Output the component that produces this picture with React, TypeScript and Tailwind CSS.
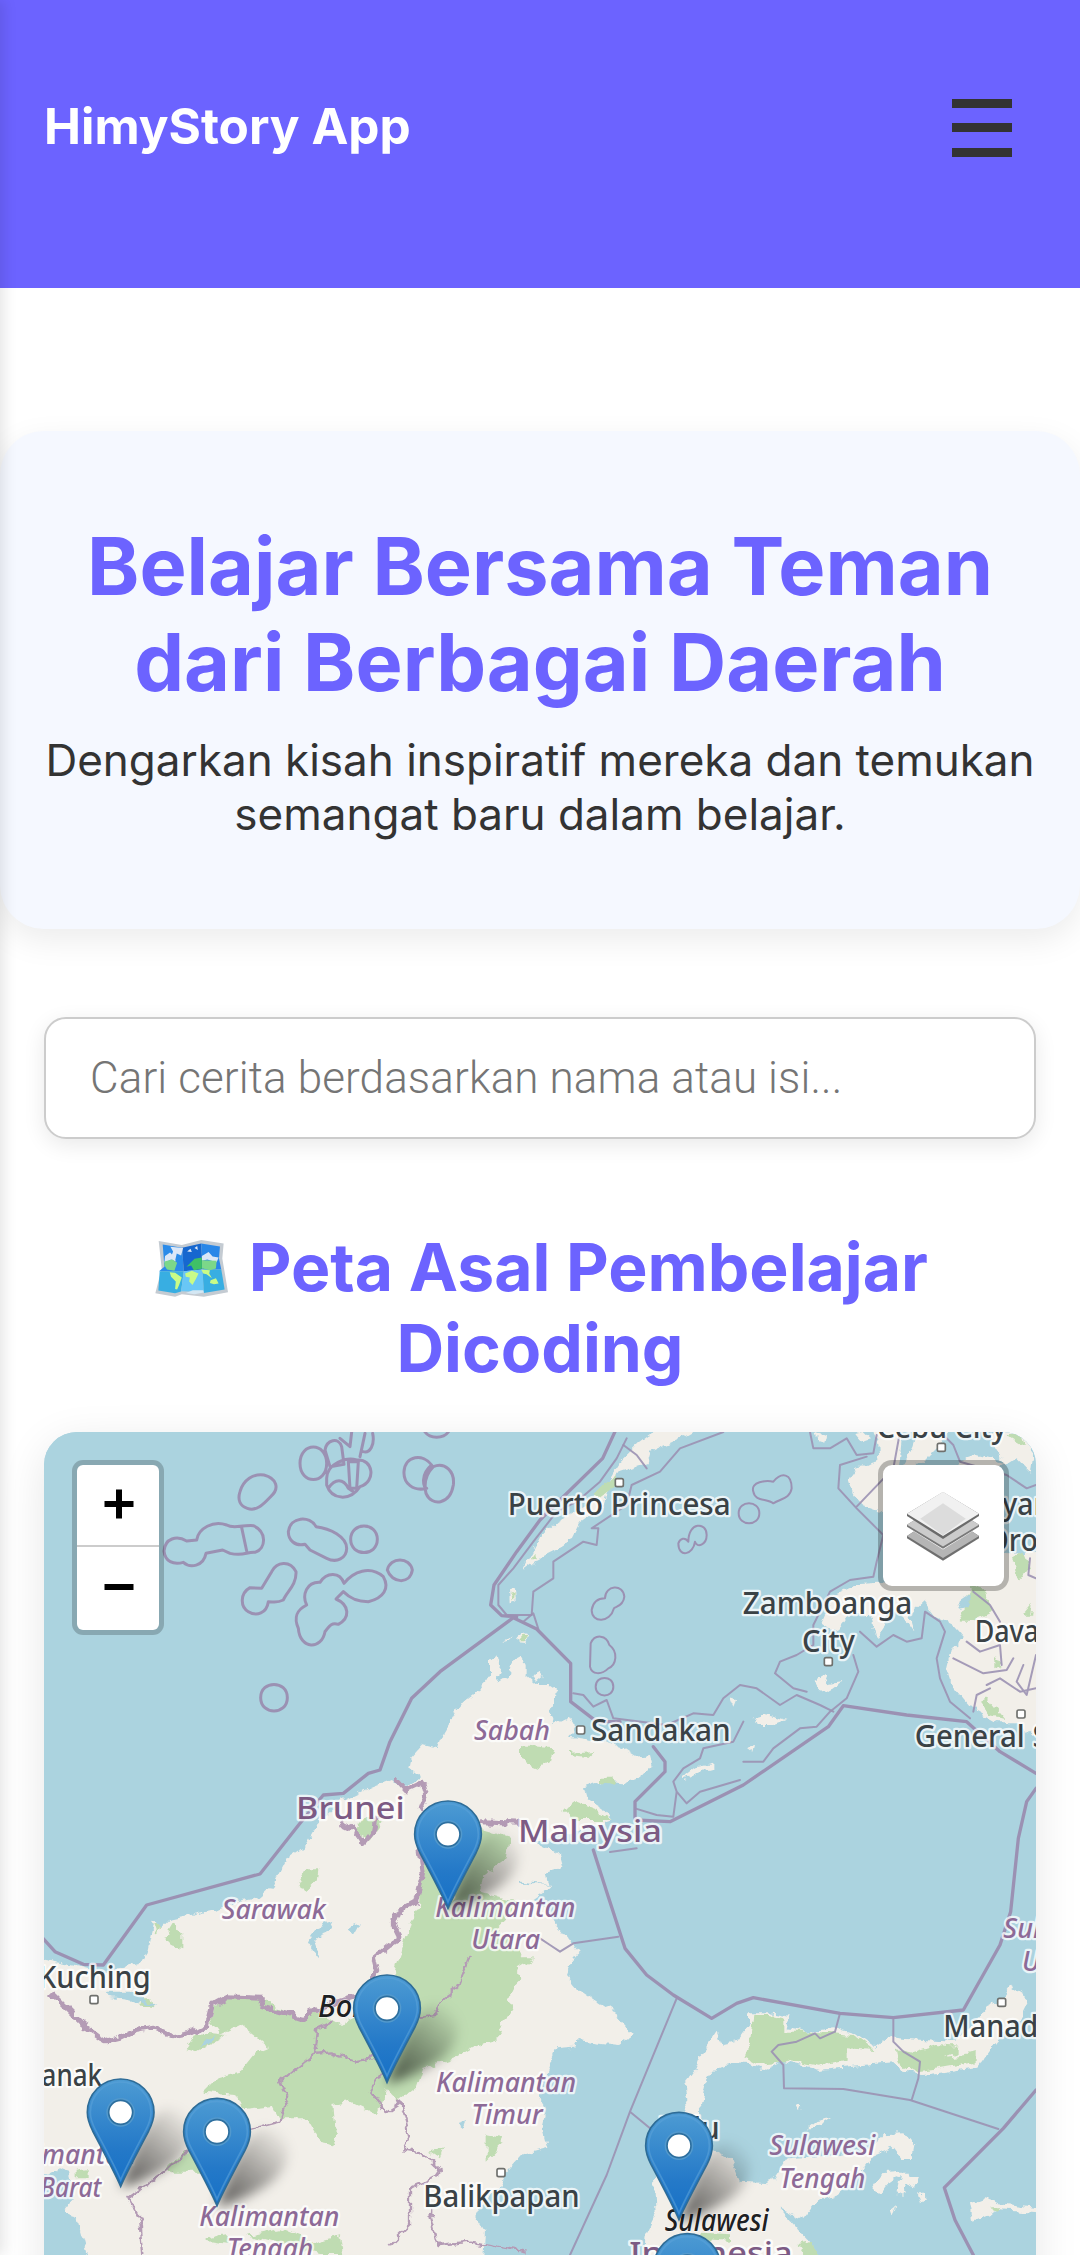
import React from "react";

type Label = { x: number; y: number; w: number; t: string; kind: "city" | "region" | "country" | "island" };

const labels: Label[] = [
  { x: 1403, y: 270, w: 669, t: "Puerto Princesa", kind: "city" },
  { x: 1653, y: 948, w: 419, t: "Sandakan", kind: "city" },
  { x: 2108, y: 568, w: 509, t: "Zamboanga", kind: "city" },
  { x: 2286, y: 680, w: 159, t: "City", kind: "city" },
  { x: 2510, y: 40, w: 390, t: "Cebu City", kind: "city" },
  { x: 2682, y: 270, w: 352, t: "Cagayan", kind: "city" },
  { x: 2839, y: 378, w: 155, t: "Oro", kind: "city" },
  { x: 2804, y: 650, w: 242, t: "Davao", kind: "city" },
  { x: 2624, y: 965, w: 330, t: "General", kind: "city" },
  { x: 2978, y: 965, w: 240, t: "Santos", kind: "city" },
  { x: -6, y: 1688, w: 338, t: "Kuching", kind: "city" },
  { x: -190, y: 1983, w: 376, t: "Pontianak", kind: "city" },
  { x: 1150, y: 2347, w: 469, t: "Balikpapan", kind: "city" },
  { x: 2710, y: 1835, w: 338, t: "Manado", kind: "city" },
  { x: 1853, y: 2143, w: 186, t: "Palu", kind: "city" },
  { x: 768, y: 1182, w: 326, t: "Brunei", kind: "country" },
  { x: 1434, y: 1252, w: 432, t: "Malaysia", kind: "country" },
  { x: 1768, y: 2518, w: 490, t: "Indonesia", kind: "country" },
  { x: 1302, y: 946, w: 228, t: "Sabah", kind: "region" },
  { x: 545, y: 1483, w: 312, t: "Sarawak", kind: "region" },
  { x: 1186, y: 1475, w: 420, t: "Kalimantan", kind: "region" },
  { x: 1294, y: 1573, w: 206, t: "Utara", kind: "region" },
  { x: 1188, y: 2002, w: 420, t: "Kalimantan", kind: "region" },
  { x: 1294, y: 2096, w: 214, t: "Timur", kind: "region" },
  { x: -130, y: 2218, w: 418, t: "Kalimantan", kind: "region" },
  { x: 0, y: 2316, w: 184, t: "Barat", kind: "region" },
  { x: 478, y: 2404, w: 420, t: "Kalimantan", kind: "region" },
  { x: 560, y: 2498, w: 260, t: "Tengah", kind: "region" },
  { x: 2188, y: 2190, w: 318, t: "Sulawesi", kind: "region" },
  { x: 2218, y: 2288, w: 258, t: "Tengah", kind: "region" },
  { x: 2890, y: 1540, w: 318, t: "Sulawesi", kind: "region" },
  { x: 2946, y: 1638, w: 206, t: "Utara", kind: "region" },
  { x: 834, y: 1777, w: 284, t: "Borneo", kind: "island" },
  { x: 1874, y: 2418, w: 312, t: "Sulawesi", kind: "island" },
];

const labelClass = {
  city: "fill-[#3a4246] font-medium",
  region: "fill-[#8d6a97] italic font-medium",
  country: "fill-[#7c5a84] font-medium",
  island: "fill-[#1d2022] italic font-medium",
};

const towns: [number, number][] = [
  [1738, 173], [1622, 915], [2704, 67], [2365, 710], [2943, 867], [162, 1724], [1383, 2243], [2885, 1732],
];

const pins: [number, number][] = [
  [1224, 1228], [1041, 1750], [242, 2062], [531, 2120], [1917, 2162], [1942, 2526],
];

const coast = [
  // Borneo
  "M0 1600L60 1610L130 1625L190 1640L310 1612L322 1575L330 1540L342 1488L360 1510L385 1485L430 1475L540 1450L600 1430L655 1420L700 1380L740 1305L790 1270L830 1200L900 1130L980 1092L1050 1065L1085 1098L1140 1060L1105 1030L1110 1005L1150 960L1190 970L1205 930L1240 870L1270 830L1320 790L1350 750L1350 710L1368 690L1383 715L1370 775L1410 750L1420 705L1445 692L1460 720L1460 755L1490 780L1520 780L1550 800L1545 840L1525 850L1540 900L1590 875L1610 910L1590 935L1690 950L1750 970L1790 995L1830 990L1838 1020L1810 1050L1750 1075L1690 1070L1632 1090L1640 1120L1690 1150L1720 1185L1650 1210L1560 1230L1480 1250L1560 1290L1570 1325L1520 1340L1530 1385L1480 1420L1530 1470L1560 1510L1615 1580L1590 1610L1575 1650L1610 1690L1670 1730L1730 1770L1785 1830L1740 1860L1610 1845L1600 1865L1550 1870L1530 1920L1500 2010L1520 2070L1510 2110L1525 2165L1450 2185L1400 2240L1380 2280L1340 2320L1310 2380L1335 2420L1330 2500L150 2500L138 2480L115 2400L80 2350L100 2320L90 2240L60 2230L0 2262Z",
  // Palawan
  "M1850 0L1830 30L1790 60L1740 110L1720 140L1690 190L1640 240L1550 290L1500 340L1480 380L1450 435L1490 405L1550 375L1590 350L1620 290L1690 240L1710 180L1740 140L1820 115L1830 80L1910 45L1990 0Z",
  "M1410 490L1425 485L1427 530L1412 535Z M1425 640L1450 625L1468 630L1450 660L1430 658Z M1390 650L1415 632L1405 648Z M1480 760L1495 740L1508 755L1490 770Z",
  // Visayas
  "M2500 0L2515 60L2518 108L2450 125L2425 160L2440 210L2470 240L2530 262L2600 262L2570 180L2580 100L2590 0Z",
  "M2640 0L2620 60L2590 120L2650 110L2700 60L2740 0Z M2750 110L2810 90L2890 110L2850 140L2760 140Z M2850 30L2890 0L2988 0L2970 140L2930 100L2900 120L2870 80Z",
  "M2330 21L2355 30L2350 50L2335 45Z M2440 28L2470 20L2490 40L2460 50Z",
  // Mindanao
  "M3000 380L2900 388L2850 330L2780 400L2700 420L2560 470L2450 478L2380 510L2345 590L2390 620L2430 570L2490 570L2510 640L2535 600L2550 540L2600 590L2620 620L2605 570L2650 530L2680 570L2740 600L2775 640L2735 670L2720 730L2740 790L2790 850L2870 895L2930 895L2990 940Z",
  "M2320 768L2350 750L2365 775L2410 768L2380 790L2360 805L2335 795Z M2140 880L2180 868L2240 885L2200 900L2150 900Z M1925 1060L1975 1020L2020 1010L2020 1030L1980 1040L1930 1065Z M2070 820L2088 825L2080 845Z M2120 965L2145 960L2140 980Z",
  // Sulawesi
  "M2030 1820L2045 1860L2090 1850L2110 1820L2130 1795L2130 1765L2190 1765L2248 1775L2240 1810L2300 1820L2380 1810L2450 1830L2500 1865L2540 1835L2600 1842L2740 1850L2800 1800L2840 1750L2880 1730L2912 1685L2965 1720L2940 1770L2870 1850L2815 1925L2720 1940L2650 1950L2590 1940L2560 1915L2500 1920L2340 1935L2230 1910L2170 1935L2120 1920L2080 1918L2030 1930L1995 1970L1980 2040L1990 2110L2010 2170L2070 2200L2100 2270L2190 2275L2240 2200L2400 2190L2490 2170L2530 2128L2590 2125L2620 2160L2612 2205L2590 2205L2560 2165L2500 2190L2450 2260L2390 2310L2330 2330L2290 2382L2220 2350L2280 2420L2350 2500L1815 2500L1820 2430L1850 2370L1845 2260L1870 2180L1920 2080L1945 2020L1935 1975L1970 1930L1985 1890Z",
  "M2500 2290L2530 2245L2580 2240L2610 2240L2600 2280L2590 2310L2570 2300L2580 2250L2550 2270L2520 2310Z M2600 2250L2640 2255L2625 2290L2600 2280Z M2630 2300L2655 2320L2640 2335Z M2550 2360L2570 2345L2555 2375Z M2790 2335L2830 2320L2880 2335L3000 2350L3000 2365L2880 2355L2800 2390Z M2300 2110L2330 2085L2380 2075L2350 2095L2315 2110Z M2268 2040L2285 2040L2280 2052Z",
];

const parks = [
  "M520 1750L560 1715L670 1720L720 1750L780 1785L830 1760L900 1800L1000 1740L1090 1700L1060 1650L1100 1530L1110 1490L1140 1440L1150 1290L1320 1210L1410 1235L1400 1300L1330 1350L1320 1400L1440 1430L1370 1500L1450 1600L1480 1600L1430 1630L1450 1660L1420 1690L1405 1720L1420 1760L1390 1790L1370 1845L1300 1865L1240 1900L1150 1930L1130 1990L1080 2030L1040 1990L1010 2070L930 2030L880 2040L890 2160L840 2150L800 2080L720 2080L700 2040L610 2050L590 2010L490 2000L530 1960L600 1940L640 1890L690 1870L640 1830L600 1800L540 1830L510 1790Z",
  "M2140 1770L2190 1770L2230 1780L2230 1820L2320 1820L2440 1830L2500 1875L2420 1870L2420 1910L2340 1925L2250 1910L2150 1920L2110 1900L2130 1850Z M2570 1870L2620 1880L2690 1860L2750 1865L2750 1885L2710 1900L2810 1885L2810 1910L2700 1930L2620 1940L2580 1915Z",
  "M1440 960L1540 970L1530 1010L1500 1030L1440 1005Z M1590 980L1660 975L1640 995L1590 990Z M1680 1055L1720 1055L1725 1080L1680 1070Z M1570 1160L1600 1130L1680 1160L1720 1185L1600 1185Z",
  "M380 2230L430 2180L500 2200L500 2240L390 2240Z M770 1390L800 1330L835 1330L830 1370L800 1400Z M370 1540L400 1490L430 1530L430 1570L390 1560Z M290 1720L330 1720L340 1750L310 1745Z M440 1870L470 1820L560 1830L470 1880Z",
  "M1660 210L1700 170L1730 150L1720 190L1680 220Z M1475 400L1490 380L1490 400Z M1428 655L1450 630L1465 630L1450 655Z M1412 510L1425 505L1422 530Z M940 1220L975 1180L1030 1190L990 1245Z",
  "M2760 560L2800 480L2840 500L2860 560L2800 590L2770 590Z M2910 400L2950 380L2970 430L2940 470Z M2860 690L2880 720L2860 730Z M2820 830L2840 820L2890 880L2850 870Z M2950 560L2975 530L2970 580Z M2900 30L2940 30L2950 60Z",
  "M1340 2130L1390 2140L1370 2180L1340 2210Z M1170 2180L1210 2170L1200 2200Z M500 2440L560 2425L560 2460L500 2450Z M620 2430L720 2410L820 2450L900 2430L910 2490L840 2490L760 2470Z M2270 2460L2310 2450L2340 2490L2290 2490Z M1980 2420L2070 2425L2070 2450L1990 2445Z M110 2240L140 2235L140 2260L110 2260Z M2850 2350L2890 2350L2880 2362Z M340 1500L360 1500L350 1530Z",
];

const lakes =
  "M800 1550L830 1510L880 1490L860 1530L820 1545L840 1600L820 1585Z M920 1510L960 1495L940 1530Z M200 1700L280 1700L350 1750L280 1725L210 1715Z M480 1860L520 1830L510 1855Z M2760 530L2790 510L2780 540L2750 545Z M1560 1380L1440 1370L1440 1376Z M1250 2095L1280 2085L1270 2110Z";

const boundaries = [
  "M0 1530L45 1580L130 1618L190 1620L320 1440L660 1347L780 1195L850 1110L910 1105L985 1045L1020 1035L1050 950L1115 820L1200 740L1420 578L1490 612L1592 715L1592 830L1670 890L1740 890",
  "M1725 20L1688 100L1560 225L1500 285L1430 380L1362 480L1352 540L1385 572L1430 575",
  "M1840 965L1875 1010L1875 1040L1785 1130L1785 1185L1890 1190L2110 1080L2365 905L2410 842L2600 870L2780 890L2880 980L2988 1045",
  "M2988 1090L2960 1130L2935 1240L2912 1460L2880 1560L2770 1755L2560 1778L2400 1765L2140 1718L2090 1735L2015 1780L1900 1710L1820 1650L1755 1570L1700 1400L1660 1275",
  "M2988 1995L2890 2110L2713 2288L2745 2385L2800 2490",
];

const thinBoundaries = [
  "M1790 1270L1710 1281",
  "M1910 1720L1770 2060L1700 2250L1590 2490M1770 2060L1830 2110M1735 1535L1600 1555M1500 1540L1530 1560L1560 1580L1600 1555",
  "M2400 1765L2385 1820L2340 1840L2325 1825L2270 1850L2215 1860L2195 1880L2230 1920L2232 1990L2410 1992L2610 2025L2875 2112M2560 1778L2560 1850L2590 1880L2640 1910L2635 1960L2615 2025",
  "M1760 40L1730 100L1680 170L1610 230L1550 260L1480 350L1420 430L1375 480L1375 540L1400 570L1475 570L1480 500L1540 460L1540 410L1630 350L1670 360L1675 310L1655 310L1760 240L1775 180L1860 140L1920 70L2050 21",
  "M1750 60L1790 90L1820 130M1450 590L1480 565L1495 612M1600 805L1630 810L1660 845L1700 825L1720 880L1880 900L1960 865L2020 870L2050 820L2100 780L2150 790L2220 840L2270 810L2340 840L2380 860",
  "M1785 1150L1850 1170L1900 1175L1910 1100L1900 1070L1930 1030L1980 1000L1990 970L2080 950L2110 890M1910 1100L1940 1135L1980 1100L2100 1065",
  "M2310 21L2320 70L2370 70L2420 40L2450 90L2500 85L2510 30M2480 95L2400 120L2395 190L2450 250L2510 310L2530 330L2510 410L2500 455L2430 465L2370 500L2340 560L2320 600L2320 660L2270 690L2220 710L2205 745L2260 790L2300 800M2450 245L2560 130L2580 21",
  "M2460 620L2510 665L2560 630L2600 650L2645 640L2655 560L2700 590L2715 620L2690 700L2700 760L2730 830L2790 880M2440 690L2455 740L2420 820L2370 860L2330 905L2280 910L2200 970L2170 1010L2110 1010",
  "M2740 700L2830 745L2900 735L2920 700M2800 500L2850 540L2880 590M2780 650L2820 680L2880 660L2885 720M2840 780L2880 760L2940 800L2988 790M2950 720L2930 770L2960 810L2988 690M2970 400L2965 450L2988 460M2800 860L2810 810L2850 790M2700 20L2740 60L2760 110L2900 150L2960 190L2988 180",
];

const landBorders = [
  "M35 1705L80 1750L130 1800L200 1850L240 1840L280 1820L340 1810L400 1835L450 1825L500 1800L515 1740L560 1715L670 1720L665 1745L740 1765L785 1780L830 1755L870 1740L960 1710L1010 1640L1000 1600L1050 1560L1080 1540L1060 1500L1075 1460L1130 1430L1150 1350L1140 1270L1160 1210",
  "M1320 1190L1440 1195M900 1190L940 1210L970 1255L1000 1220L1010 1170M1060 1060L1095 1100L1150 1075L1160 1110L1140 1160",
];

const provinceBorders = [
  "M1290 1590L1270 1640L1250 1690L1210 1720L1180 1770L1120 1780L1050 1850L990 1900L940 1910L875 1885L820 1890L720 1970L745 2020L720 2090L640 2110L530 2140L430 2190L380 2240L320 2280L265 2320L300 2380L310 2490",
  "M880 1790L835 1810L825 1890M1050 1900L990 2000L1035 2060L1080 2030L1110 2130L1090 2170L1145 2180L1200 2230L1180 2260L1110 2290L1110 2400L1050 2460M1170 2360L1195 2460L1290 2450L1460 2480",
];

const reefs = [
  "M600 200C610 165 640 145 672 150C710 160 720 190 692 215C670 238 650 260 622 250C600 243 592 225 600 200Z",
  "M780 115C780 50 860 50 860 115C860 180 780 180 780 115Z M855 75C860 45 895 35 905 65L912 118L870 125Z M860 160C860 115 920 95 950 105C1000 100 1010 170 960 185C930 230 875 225 860 180Z M925 110L955 110L950 190L930 190Z M865 190C885 160 910 160 925 190L940 200 M935 21L930 65L900 40 M975 25L960 95 M998 25C1005 60 990 85 970 80",
  "M372 378C375 340 410 330 440 348L470 345C475 310 520 285 560 300C580 312 600 300 640 302C680 320 680 370 645 382C620 380 610 395 570 385L548 375L498 385C490 425 450 430 430 412C400 420 375 410 372 378Z M605 308L620 378",
  "M745 320C750 275 810 270 828 305C870 310 920 335 920 370C920 400 890 415 860 400L810 375L795 358C765 365 745 345 745 320Z",
  "M932 343C932 290 1012 290 1012 343C1012 396 932 396 932 343Z",
  "M665 490L695 440C710 410 750 405 768 440C770 480 740 500 730 525C710 535 700 530 685 530C680 565 650 575 625 560C600 545 600 505 630 488Z",
  "M800 540C785 510 800 470 840 472C860 440 900 440 912 475C940 440 990 420 1030 455C1050 490 1030 520 985 530C950 530 930 520 910 500L888 522C930 540 930 580 895 598C870 590 865 610 855 620C845 675 780 675 775 610C760 575 770 555 800 540Z",
  "M662 818C662 765 742 765 742 818C742 871 662 871 662 818Z",
  "M1042 435C1050 395 1110 395 1117 435C1110 480 1055 475 1042 435Z",
  "M1092 140C1095 90 1150 85 1175 120C1140 150 1150 185 1160 190C1120 200 1090 175 1092 140Z M1180 125C1215 110 1245 140 1240 180C1230 240 1175 245 1158 205C1150 170 1160 145 1180 125Z M1155 21C1170 42 1210 42 1225 21",
];

const islets = [
  "M1945 350C1945 290 2000 290 2000 330C2000 360 1970 370 1965 350C1960 390 1915 400 1915 355C1920 340 1935 335 1945 350Z",
  "M1695 520C1695 480 1750 475 1753 515C1750 545 1725 545 1722 550C1710 595 1655 595 1655 555C1660 525 1680 520 1695 520Z",
  "M1652 655C1665 625 1700 630 1708 660C1735 680 1730 720 1705 730C1685 750 1655 750 1650 725Z",
  "M1667 785C1667 750 1720 750 1720 785C1720 820 1667 820 1667 785Z",
  "M2140 200C2130 170 2180 165 2200 170C2225 140 2255 145 2255 190C2250 220 2225 220 2200 235C2180 220 2145 230 2140 200Z M2096 265C2096 225 2158 225 2158 265C2158 305 2096 305 2096 265Z",
];

function Pin({ x, y }: { x: number; y: number }) {
  return (
    <g transform={`translate(${x} ${y})`}>
      <path d="M0 226C40 120 70 10 140 -12C225 -12 240 90 165 150C110 190 45 215 0 226Z" fill="url(#pinShade)" filter="url(#shadeBlur)" />
      <path
        d="M0 222C-10 198 -30 158 -84 56C-95 34 -100 16 -100 0A100 100 0 0 1 100 0C100 16 95 34 84 56C30 158 10 198 0 222Z"
        fill="url(#pinFill)"
        stroke="#2e6c97"
        strokeWidth="5"
      />
      <path
        d="M0 203C-12 172 -28 142 -76 52C-87 31 -91 14 -91 0A91 91 0 0 1 91 0C91 14 87 31 76 52C28 142 12 172 0 203Z"
        fill="none"
        stroke="#5aa2d8"
        strokeOpacity="0.6"
        strokeWidth="5"
      />
      <circle r="39" fill="#fff" stroke="#5299cd" strokeWidth="8" />
      <circle r="36" fill="#fff" stroke="#2d6f9f" strokeWidth="5" />
    </g>
  );
}

function MapCanvas() {
  return (
    <svg viewBox="12 21 2976 2469" className="block h-[823px] w-[992px] font-['Noto_Sans',sans-serif]" role="img">
      <defs>
        <linearGradient id="pinFill" x1="0" y1="0" x2="0" y2="1">
          <stop offset="0" stopColor="#4d9bd3" />
          <stop offset="0.65" stopColor="#2479c8" />
          <stop offset="1" stopColor="#1670c6" />
        </linearGradient>
        <linearGradient id="pinShade" x1="0" y1="1" x2="0.8" y2="0">
          <stop offset="0" stopColor="#000" stopOpacity="0.65" />
          <stop offset="0.5" stopColor="#000" stopOpacity="0.34" />
          <stop offset="1" stopColor="#000" stopOpacity="0.02" />
        </linearGradient>
        <filter id="shadeBlur" x="-30%" y="-30%" width="160%" height="160%">
          <feGaussianBlur stdDeviation="18" />
        </filter>
        <filter id="rough" x="0" y="0" width="2988" height="2500" filterUnits="userSpaceOnUse">
          <feTurbulence type="fractalNoise" baseFrequency="0.03" numOctaves="3" seed="4" />
          <feDisplacementMap in="SourceGraphic" scale="30" xChannelSelector="R" yChannelSelector="G" />
        </filter>
      </defs>
      <rect x="0" y="0" width="3000" height="2500" fill="#abd3df" />
      <g filter="url(#rough)">
        <path d={coast.join("")} fill="#f2efe9" />
        <path d={parks.join("")} fill="#bfdcb2" />
        <path d={lakes} fill="#abd3df" />
        <g fill="none" stroke="#b49bb5" strokeLinejoin="round">
          {landBorders.map((d) => <path key={d} d={d} strokeWidth="15" />)}
          {provinceBorders.map((d) => <path key={d} d={d} strokeWidth="7" />)}
        </g>
      </g>
      <g fill="none" stroke="#9b91b3" strokeLinejoin="round" strokeLinecap="round">
        {boundaries.map((d) => <path key={d} d={d} strokeWidth="10" />)}
        {reefs.map((d) => <path key={d} d={d} strokeWidth="9" />)}
        {thinBoundaries.map((d) => <path key={d} d={d} strokeWidth="6" strokeOpacity="0.9" />)}
        {islets.map((d) => <path key={d} d={d} strokeWidth="6" />)}
      </g>
      {towns.map(([x, y]) => (
        <rect key={x} x={x - 12} y={y - 12} width="24" height="24" rx="5" fill="#fff" stroke="#6f706d" strokeWidth="5" />
      ))}
      {labels.map((l) => (
        <text
          key={`${l.t}${l.x}`}
          x={l.x}
          y={l.y}
          textLength={l.w}
          lengthAdjust="spacingAndGlyphs"
          fontSize={l.kind === "region" ? 83 : 91}
          stroke="#fff"
          strokeOpacity="0.75"
          strokeWidth={l.kind === "island" ? 4 : 14}
          strokeLinejoin="round"
          paintOrder="stroke"
          className={labelClass[l.kind]}
        >
          {l.t}
        </text>
      ))}
      {pins.map(([x, y]) => <Pin key={x} x={x} y={y} />)}
    </svg>
  );
}

function WorldMapIcon() {
  return (
    <svg viewBox="32 60 218 170" className="mr-[5px] ml-[3px] inline-block h-[57px] w-[73px] align-[-6px]">
      <path d="M43 63L112 75L170 60L237 70L233 115L250 216L178 229L112 222L92 229L33 219L52 145Z" fill="#c4cbd2" />
      <path d="M55 73L113 83L118 153L44 153L60 140Z" fill="#2b8be9" />
      <path d="M113 83L170 70L174 148L118 153Z" fill="#1667cf" />
      <path d="M170 70L226 79L223 115L230 148L174 148Z" fill="#2987e8" />
      <path d="M46 153L118 153L110 214L92 219L42 211Z" fill="#38aee2" />
      <path d="M118 153L174 148L178 215L110 213Z" fill="#69c7f6" />
      <path d="M174 148L230 148L240 208L178 218Z" fill="#38aee2" />
      <path d="M78 80L116 84L110 106L97 100L92 122L80 111L86 94Z M62 108L77 97L91 112L94 124L80 118L60 128Z M172 108L192 96L204 109L222 112L216 126L188 118L172 122Z M128 94L138 86L142 96Z M150 84L158 78L160 90Z" fill="#dbe7f7" />
      <path d="M60 124L84 118L98 128L90 152L68 148L60 136Z M172 120L216 122L214 145L196 150L172 144Z" fill="#7cd889" />
      <path d="M126 140L150 116L172 112L172 146L148 150L140 136Z" fill="#3fc066" />
      <path d="M76 156L92 158L112 172L104 194L98 208L92 206L94 184L80 170Z M122 160L142 152L162 160L154 176L144 194L134 184L136 172L124 170Z M170 148L196 150L194 160L202 174L186 162L176 160Z M198 180L214 174L222 190L208 192L196 188Z" fill="#c9fb87" />
      <path d="M124 218L145 210L176 210L178 217L150 222Z" fill="#d4e7f3" />
    </svg>
  );
}

function LayersIcon() {
  return (
    <svg viewBox="500 198 218 210" className="h-[70px] w-[72px]">
      <path d="M500 333L609 262L718 333V340L609 408L500 340Z" fill="#6f6f6f" />
      <path d="M500 333L609 262L718 333L609 400Z" fill="#b5b5b5" />
      <path d="M500 299L609 230L718 299V306L609 374L500 306Z" fill="#fff" />
      <path d="M500 299L609 230L718 299V305L609 372L500 305Z" fill="#787878" />
      <path d="M500 299L609 230L718 299L609 365Z" fill="#cbcbcb" />
      <path d="M500 266L609 200L718 266V273L609 342L500 273Z" fill="#6b6b6b" />
      <path d="M500 266L609 199L718 266L609 333Z" fill="#f1f1f1" />
      <path d="M540 281L609 234L678 281L609 331Z" fill="#dcdcdc" />
    </svg>
  );
}

export default function App() {
  return (
    <div className="relative h-[2255px] w-[1080px] overflow-hidden bg-white font-['Inter',sans-serif] text-[#333]">
      <header className="flex h-[288px] items-start justify-between bg-[#6c63ff] pr-[68px] pl-[44px]">
        <div className="mt-[96px] text-[49.5px] leading-[60px] font-bold text-white">HimyStory App</div>
        <button aria-label="Menu" className="mt-[98.5px] flex w-[60px] flex-col gap-[15.5px]">
          <span className="h-[9px] bg-[#333]" />
          <span className="h-[9px] bg-[#333]" />
          <span className="h-[9px] bg-[#333]" />
        </button>
      </header>

      <main className="pt-[143px]">
        <section className="h-[498px] rounded-[44px] bg-[#f5f8ff] pt-[87px] text-center shadow-[0_11px_33px_rgba(0,0,0,0.08)]">
          <h1 className="text-[79.2px] leading-[96px] font-bold text-[#6c63ff]">
            Belajar Bersama Teman
            <br />
            dari Berbagai Daerah
          </h1>
          <p className="mt-[23px] text-[44px] leading-[54px] whitespace-nowrap">
            Dengarkan kisah inspiratif mereka dan temukan
            <br />
            semangat baru dalam belajar.
          </p>
        </section>

        <div className="px-[44px] pt-[88px]">
          <input
            type="text"
            placeholder="Cari cerita berdasarkan nama atau isi..."
            className="block h-[122px] w-full rounded-[22px] border-2 border-[#ccc] bg-white px-[44px] font-['Roboto',sans-serif] text-[44px] font-light tracking-[0.12px] shadow-[0_6px_22px_rgba(0,0,0,0.09)] outline-none placeholder:text-[#757575] placeholder:opacity-100"
          />

          <h2 className="mt-[88px] text-center text-[66px] leading-[81px] font-bold text-[#6c63ff]">
            <WorldMapIcon /> Peta Asal Pembelajar
            <br />
            Dicoding
          </h2>

          <div className="relative mt-[43px] h-[1100px] overflow-hidden rounded-[33px] bg-[#abd3df] shadow-[0_11px_44px_rgba(0,0,0,0.1)]">
            <MapCanvas />
            <div className="absolute top-[28px] left-[28px] flex w-[92px] flex-col overflow-hidden rounded-[11px] border-[5px] border-black/20 bg-white bg-clip-padding">
              <button aria-label="Zoom in" className="flex h-[82px] items-center justify-center border-b-2 border-[#ccc] pb-[2px] pl-[2px]">
                <svg viewBox="0 0 30 30" className="h-[30px] w-[30px]" stroke="#000" strokeWidth="6">
                  <path d="M0.5 15H29.5M15 0.5V29.5" />
                </svg>
              </button>
              <button aria-label="Zoom out" className="flex h-[83px] items-center justify-center pb-[4px] pl-[2px]">
                <svg viewBox="0 0 30 30" className="h-[30px] w-[30px]" stroke="#000" strokeWidth="6">
                  <path d="M0.5 15H29.5" />
                </svg>
              </button>
            </div>
            <button
              aria-label="Layers"
              className="absolute top-[28px] right-[27px] flex h-[131px] w-[131px] items-center justify-center rounded-[14px] border-[5px] border-black/25 bg-white bg-clip-padding pr-[2px]"
            >
              <LayersIcon />
            </button>
          </div>
        </div>
      </main>

      <aside className="absolute inset-y-0 -left-[40px] w-[40px] shadow-[4px_0_14px_rgba(0,0,0,0.1)]" />
    </div>
  );
}
